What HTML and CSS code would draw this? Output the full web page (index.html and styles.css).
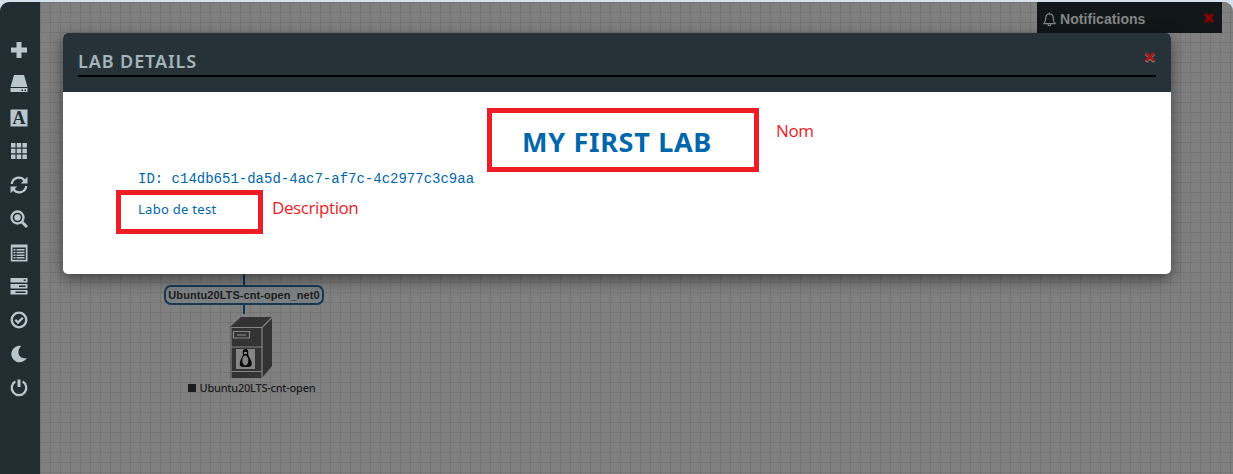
FILE: index.html
```
<!DOCTYPE html>
<html lang="en">
<head>
<meta charset="utf-8">
<title>Lab details</title>
<link rel="stylesheet" href="styles.css">
</head>
<body>
<div class="app">
  <nav class="sidebar">
    <svg viewBox="0 0 18 18"><path d="M6.500 1h5v5.500H17v5h-5.500V17h-5v-5.500H1v-5h5.500z"/></svg>
    <svg viewBox="0 0 18 18"><path d="M4 0h10l3.500 12H.5zM.5 13h17v4H.5z"/><path class="cut" d="M11.500 14.500H13V16h-1.500zM14.500 14.500H16V16h-1.500z"/></svg>
    <svg viewBox="0 0 18 18"><path d="M.5 .5h17v17H.5z"/><text class="letter" x="9" y="14.800" text-anchor="middle">A</text></svg>
    <svg viewBox="0 0 18 18"><path d="M1 1h4.500v4.500H1zM6.700 1h4.500v4.500H6.700zM12.400 1h4.500v4.500h-4.500zM1 6.700h4.500v4.500H1zM6.700 6.700h4.500v4.500H6.700zM12.400 6.700h4.500v4.500h-4.500zM1 12.400h4.500v4.500H1zM6.700 12.400h4.500v4.500H6.700zM12.400 12.400h4.500v4.500h-4.500z"/></svg>
    <svg viewBox="0 0 18 18"><path class="line" d="M1.800 8C2.500 1.500 10.500-.5 14.500 4.500M16.200 10c-.7 6.500-8.700 8.500-12.700 3.500"/><path d="M17.500 .8v6.700h-6.700zM.5 17.200v-6.700h6.700z"/></svg>
    <svg viewBox="0 0 18 18"><circle class="line" cx="7.500" cy="7.500" r="6"/><circle cx="7.500" cy="7.500" r="3.200"/><path class="line thick" d="M12 12l5 5"/></svg>
    <svg viewBox="0 0 18 18"><path d="M.8 .5h16.700v17H.8z"/><path class="cut" d="M2.500 3.500h13.300v12.300H2.500z"/><path d="M3.500 5h2v1.500h-2zM6.500 5h8v1.500h-8zM3.500 7.700h2v1.500h-2zM6.500 7.700h8v1.500h-8zM3.500 10.400h2v1.500h-2zM6.500 10.400h8v1.500h-8zM3.500 13h2v1.500h-2zM6.500 13h8v1.500h-8z"/></svg>
    <svg viewBox="0 0 18 18"><rect x=".5" y="1" width="17" height="4.500" rx=".6"/><rect x=".5" y="7" width="17" height="4.500" rx=".6"/><rect x=".5" y="13" width="17" height="4.500" rx=".6"/><path class="cut" d="M13.700 2.500h2V4h-2zM9 8.500h6.500V10H9zM5.500 14.500h10V16h-10z"/></svg>
    <svg viewBox="0 0 18 18"><circle class="line" cx="9" cy="9" r="7.300"/><path class="line" d="M5.300 8.800l2.700 2.700 4.800-4.800"/></svg>
    <svg viewBox="0 0 18 18"><path d="M11.200 .9A8.300 8.300 0 1 0 16.900 13C9 15 5.500 6.500 11.200 .9z"/></svg>
    <svg viewBox="0 0 18 18"><path class="line" d="M5.300 2.600a7.300 7.300 0 1 0 7.400 0"/><path class="line thick" d="M9 .5v7.500"/></svg>
  </nav>
  <main class="canvas">
    <div class="topology">
      <div class="network">Ubuntu20LTS-cnt-open_net0</div>
      <div class="cable"></div>
      <svg class="server" viewBox="0 0 42 62">
        <path class="shell" d="M0 10L11 0h31v49L32 61H0z"/>
        <path class="edge" d="M1 10.500h31M32 61V10.500L42 .5M1 10v51M1 30h31M1 54.500h31M3.500 14.500h16v6.500h-16z"/>
        <path class="edge" d="M7 18h9"/>
        <path class="paper" d="M6 32h19v20H6z"/>
        <path class="bird" d="M15.500 32c-3 0-3 3-2.500 5 .3 2-2.500 5-3 8-.3 3-1 5 5.500 5s6.500-1 6-5c-.3-3-3.300-5-3.300-8 .2-2.500.3-5-2.700-5z"/>
        <ellipse class="paper" cx="15.300" cy="43.500" rx="3" ry="5"/>
        <path class="paper" d="M14 35h3v2h-3z"/>
      </svg>
      <div class="node-name"><i></i><span>Ubuntu20LTS-cnt-open</span></div>
    </div>
  </main>
  <div class="notifications">
    <svg class="bell" viewBox="0 0 14 16"><path d="M1 12.500c2-2 2-3.500 2-6 0-6 8-6 8 0 0 2.500 0 4 2 6zM5.500 13c0 2.300 3 2.300 3 0M7 .5V2"/></svg>
    <span>Notifications</span>
    <svg class="close" viewBox="0 0 12 12"><path d="M2 2l8 8M10 2l-8 8"/></svg>
  </div>
  <section class="modal">
    <header class="modal-head">
      <div class="modal-title"><h1>LAB DETAILS</h1>
        <svg class="close bright" viewBox="0 0 12 12"><path class="halo" d="M2 2.700l8 8M10 2.700l-8 8"/><path d="M2 2l8 8M10 2l-8 8"/></svg>
      </div>
    </header>
    <div class="modal-body">
      <h2>MY FIRST LAB</h2>
      <p class="lab-id">ID: c14db651-da5d-4ac7-af7c-4c2977c3c9aa</p>
      <p class="lab-text">Labo de test</p>
    </div>
  </section>
  <div class="frame frame-name"></div>
  <span class="note note-name">Nom</span>
  <div class="frame frame-text"></div>
  <span class="note note-text">Description</span>
</div>
</body>
</html>
```
FILE: styles.css
```
* { box-sizing: border-box; }
body { margin: 0; background: #d5e1ed; overflow: hidden; }
h1, h2, p { margin: 0; white-space: nowrap; }
.app { position: relative; display: flex; height: 472px; margin-top: 2px; border-radius: 9px 9px 0 0; overflow: hidden; }
.sidebar { width: 40px; background: #222d32; display: flex; flex-direction: column; align-items: center; gap: 15.750px; padding: 39px 2px 0 0; }
.sidebar svg { width: 18px; height: 18px; flex: none; fill: #b8c7ce; }
.sidebar .cut { fill: #222d32; }
.sidebar .line { fill: none; stroke: #b8c7ce; stroke-width: 2.300; }
.sidebar .thick { stroke-width: 3; }
.sidebar .letter { font: bold 18px "Liberation Serif", serif; fill: #222d32; }
.canvas {
  flex: 1;
  background-color: #808080;
  background-image: linear-gradient(90deg, #757575 1px, transparent 1px), linear-gradient(#757575 1px, transparent 1px);
  background-size: 10px 10px;
  background-position: 0 0, 0 10px;
}
.topology { width: 160px; margin: 262px 0 0 124px; padding-top: 21px; display: flex; flex-direction: column; align-items: center; background: linear-gradient(#053a5d, #053a5d) 79px 0 / 2px 21px no-repeat; }
.network { width: 160px; height: 20px; border: 2px solid #163a54; border-radius: 7px; background: #7b8083; color: #1c1c1c; font: bold 11px/17px "Liberation Sans", sans-serif; letter-spacing: .07px; text-align: center; white-space: nowrap; }
.cable { width: 2px; height: 9px; background: #053a5d; }
.server { width: 42px; height: 62px; margin: 3px 0 0 14px; }
.shell { fill: #333; }
.edge { fill: none; stroke: #858585; stroke-width: 1.200; }
.paper { fill: #858585; }
.bird { fill: #080808; }
.node-name { display: flex; align-items: center; gap: 4px; height: 17px; margin: 0 0 0 15px; color: #1c1c1c; font: 500 11px/17px "Noto Sans", sans-serif; letter-spacing: -.24px; white-space: nowrap; }
.node-name i { width: 8px; height: 8px; background: #1c1c1c; }
.notifications { position: absolute; top: 0; left: 1037px; width: 185px; height: 31px; padding: 0 7px 0 6px; display: flex; align-items: center; background: #111719; color: #848484; font: bold 14px "Liberation Sans", sans-serif; }
.notifications span { margin: 3px auto 0 4px; letter-spacing: .05px; }
.bell { width: 13px; height: 15px; margin-top: 3px; fill: none; stroke: #848484; stroke-width: 1.300; }
.close { width: 12px; height: 12px; fill: none; stroke: #850000; stroke-width: 3.300; }
.modal { position: absolute; top: 31px; left: 63px; width: 1108px; height: 241px; border-radius: 5px; overflow: hidden; background: #fff; box-shadow: 0 5px 15px rgba(0,0,0,.5); }
.modal-head { height: 59px; padding: 15px; background: #263238; }
.modal-title { height: 29px; display: flex; align-items: flex-start; justify-content: space-between; border-bottom: 2px solid #000; }
.modal h1 { color: #a5b4b9; font: 600 18px/27px "Noto Sans", sans-serif; letter-spacing: .9px; }
.bright { margin-top: 3px; stroke: #a3161c; stroke-width: 2.900; }
.halo { stroke: #aaa; }
.modal-body { padding: 29px 75px; color: #0067ac; }
.modal h2 { font: bold 27px/41px "Noto Sans", sans-serif; letter-spacing: .7px; text-align: center; }
.lab-id { margin-top: 8px; font: 14px/18px "Liberation Mono", monospace; }
.lab-text { margin-top: 12px; font: 13px/18px "Noto Sans", sans-serif; letter-spacing: .28px; }
.frame { position: absolute; border: 5px solid #ee1c24; }
.frame-name { left: 487px; top: 106px; width: 272px; height: 64px; }
.frame-text { left: 116px; top: 188px; width: 147px; height: 44px; }
.note { position: absolute; color: #ee1c24; font: 17px/20px "Open Sans", sans-serif; letter-spacing: -.4px; }
.note-name { left: 776px; top: 119px; }
.note-text { left: 272px; top: 196px; }
```
